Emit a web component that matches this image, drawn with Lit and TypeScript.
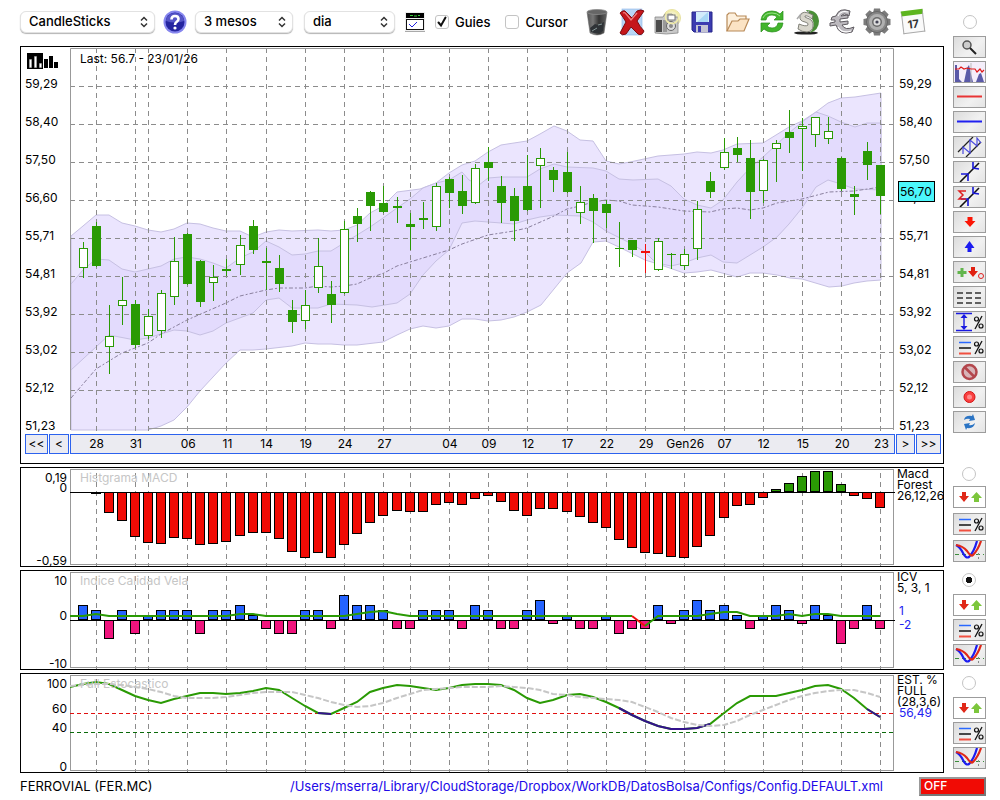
import { LitElement, html, svg, css } from "lit";
import { customElement, property } from "lit/decorators.js";

const X0 = 83.1;
const STEP = 13.08;
const barX = (i: number) => Math.floor(X0 + STEP * i);

const TICKS: [number, string][] = [
  [1, "28"], [4, "31"], [5, ""], [8, "06"], [11, "11"], [14, "14"], [17, "19"], [20, "24"], [23, "27"],
  [25, ""], [28, "04"], [31, "09"], [34, "12"], [37, "17"], [40, "22"], [43, "29"], [46, "Gen26"],
  [49, "07"], [52, "12"], [55, "15"], [58, "20"], [61, "23"],
];

const PRICES = ["59,29", "58,40", "57,50", "56,60", "55,71", "54,81", "53,92", "53,02", "52,12", "51,23"];

// high, body top, body bottom, low, kind (h hollow, f filled, r red)
const CANDLES: [number, number, number, number, string][] = [
  [242, 248, 268, 278, "h"], [222, 226, 266, 267, "f"], [305, 336, 347, 374, "h"], [277, 300, 306, 325, "h"],
  [300, 304, 345, 348, "f"], [309, 316, 336, 339, "h"], [290, 293, 331, 338, "h"], [237, 261, 297, 305, "h"],
  [233, 234, 284, 285, "f"], [260, 261, 302, 307, "f"], [265, 277, 283, 301, "h"], [259, 269, 271, 276, "f"],
  [235, 245, 265, 275, "h"], [220, 226, 250, 254, "f"], [248, 261, 263, 290, "f"], [255, 268, 284, 292, "f"],
  [300, 310, 322, 333, "f"], [290, 305, 321, 329, "h"], [238, 266, 288, 293, "h"], [281, 294, 305, 323, "f"],
  [221, 229, 293, 294, "h"], [208, 216, 224, 242, "f"], [191, 192, 206, 231, "f"], [186, 203, 212, 213, "f"],
  [197, 206, 208, 223, "f"], [213, 224, 227, 250, "f"], [202, 218, 220, 229, "f"], [183, 186, 227, 231, "h"],
  [177, 179, 193, 208, "f"], [175, 191, 206, 214, "f"], [164, 168, 203, 204, "h"], [147, 162, 168, 181, "f"],
  [176, 186, 203, 223, "f"], [188, 196, 221, 241, "f"], [155, 186, 210, 211, "f"], [148, 158, 166, 208, "h"],
  [167, 170, 180, 192, "f"], [152, 172, 192, 193, "f"], [186, 202, 213, 224, "h"], [194, 198, 211, 243, "f"],
  [200, 204, 213, 228, "f"], [222, 248, 249, 267, "f"], [240, 240, 250, 257, "f"], [244, 251, 253, 273, "r"],
  [238, 241, 270, 271, "h"], [253, 254, 255, 269, "f"], [249, 254, 266, 270, "h"], [201, 209, 249, 260, "h"],
  [172, 181, 192, 198, "f"], [138, 152, 168, 170, "h"], [137, 148, 155, 162, "f"], [140, 158, 192, 219, "f"],
  [159, 160, 191, 203, "h"], [140, 143, 149, 182, "h"], [110, 132, 138, 153, "f"], [118, 126, 129, 171, "h"],
  [117, 117, 135, 147, "h"], [117, 131, 139, 144, "h"], [157, 158, 189, 191, "f"], [186, 194, 197, 215, "f"],
  [142, 151, 165, 180, "f"], [165, 165, 196, 214, "f"],
];

const OUTER_TOP = "71,236 83,226 96,215 109,215 122,223 135,226 148,230 161,232 174,229 187,223 200,224 213,228 226,231 240,231 253,237 266,232 279,230 292,231 318,230 331,231 344,230 357,225 370,213 383,206 397,192 420,189 436,183 449,173 462,165 475,161 488,152 501,145 527,141 540,134 554,126 567,131 580,140 593,141 606,161 619,164 630,162 658,156 684,154 697,152 711,153 723,150 737,144 763,143 776,135 789,127 802,121 816,112 828,103 841,98 855,97 881,93";
const OUTER_BOTTOM = "881,280 867,281 854,283 842,286 829,287 802,279 790,278 777,275 763,273 750,273 737,277 711,270 697,272 684,273 658,264 645,260 619,247 606,241 593,242 581,263 567,273 541,305 527,312 514,317 501,320 488,321 475,319 462,319 449,326 436,328 423,326 410,329 397,335 383,342 357,345 344,345 331,344 318,344 305,343 292,346 266,349 253,350 240,350 226,363 200,391 187,407 174,420 161,426 148,430 71,430";
const INNER_TOP = "71,284 83,270 96,259 109,260 122,269 135,272 161,266 174,259 187,257 200,259 213,263 226,268 240,258 253,252 266,241 279,247 292,255 305,254 318,251 331,251 344,243 357,235 370,227 383,218 397,208 410,199 423,188 436,183 449,180 462,172 469,180 479,185 488,178 501,177 527,177 540,169 554,164 567,167 593,168 606,171 619,179 633,180 658,179 671,186 684,199 697,205 711,208 723,200 737,182 750,168 763,157 776,145 789,133 802,122 816,112 828,116 841,122 855,127 867,123 881,123";
const INNER_BOTTOM = "881,190 855,189 841,184 828,180 816,187 802,208 789,224 777,237 763,247 750,255 737,263 723,262 711,255 697,258 684,263 671,266 662,264 653,260 645,252 630,243 606,231 593,222 580,216 554,215 540,217 527,220 514,224 475,221 462,223 449,250 436,261 423,275 410,294 397,303 372,307 357,305 331,304 318,308 292,308 279,298 266,300 253,313 226,323 213,331 200,335 187,331 174,330 148,338 135,340 109,335 71,370";
const MIDDLE = "71,398 96,369 122,353 148,343 161,334 187,320 226,303 240,296 266,290 279,288 305,288 318,286 331,287 344,286 357,284 370,278 384,273 397,266 410,262 449,250 462,244 488,235 514,231 527,228 554,216 567,209 580,206 593,202 606,200 619,201 632,205 658,207 684,211 710,212 723,209 737,208 750,210 763,208 777,203 802,199 829,192 854,191 881,187";

const MACD = [
  492, 493, 512, 520, 536, 542, 543, 537, 538, 544, 543, 541, 535, 532, 532, 538, 551, 557, 552, 557, 544, 533,
  522, 515, 510, 511, 511, 504, 502, 504, 498, 495, 501, 510, 515, 508, 508, 511, 516, 522, 527, 539, 547, 552,
  553, 556, 557, 546, 535, 517, 505, 504, 497, 489, 483, 476, 471, 471, 484, 495, 498, 507,
];
const ICV = [
  3, 2, -4, 2, -3, 1, 2, 2, 2, -3, 2, 2, 3, 1, -2, -3, -3, 2, 2, -2, 5, 3, 3, 2, -2, -2, 2, 2, 2, -2, 3, 2, -2,
  -2, 2, 4, -1, 1, -2, -2, 1, -3, -2, -2, 3, -1, 2, 4, 2, 3, 1, -2, 1, 3, 2, -1, 3, 1, -5, -2, 3, -2,
];
const ICV_BUMPS: Record<number, number> = {
  1: 614, 12: 614, 13: 614, 21: 614, 22: 612, 23: 611, 24: 614, 43: 626, 48: 614, 49: 612, 50: 612, 54: 614, 56: 614, 57: 614,
};
const STOCH = [
  684, 682, 684, 690, 696, 700, 703, 699, 696, 693, 693, 694, 693, 691, 688, 690, 698, 706, 713, 714, 708, 702,
  692, 688, 685, 686, 688, 690, 688, 685, 684, 684, 685, 690, 698, 703, 700, 695, 694, 697, 702, 708, 715, 721,
  726, 729, 729, 728, 724, 713, 703, 696, 696, 696, 693, 690, 686, 685, 689, 698, 709, 717,
];
const STOCH_AVG = [
  685, 684, 684, 685, 687, 689, 692, 696, 698, 698, 698, 697, 695, 693, 692, 692, 692, 695, 698, 702, 705, 707,
  706, 703, 698, 694, 690, 689, 688, 687, 687, 687, 686, 687, 688, 690, 694, 695, 697, 698, 699, 700, 702, 707,
  712, 718, 722, 725, 726, 725, 721, 715, 710, 705, 700, 696, 693, 691, 690, 690, 693, 697,
];

const line = (ys: number[], from: number, to: number) =>
  ys.slice(from, to + 1).map((y, k) => `${barX(from + k)},${y}`).join(" ");

const verticals = (top: number, bottom: number) =>
  TICKS.map(([i]) => svg`<line class="grid" x1=${barX(i) + 0.5} x2=${barX(i) + 0.5} y1=${top} y2=${bottom}></line>`);

const priceSvg = () => svg`
  <polygon class="outer" points="${OUTER_TOP} ${OUTER_BOTTOM}"></polygon>
  <polygon class="inner" points="${INNER_TOP} ${INNER_BOTTOM}"></polygon>
  <polyline class="mid" points=${MIDDLE}></polyline>
  ${verticals(48, 431)}
  ${PRICES.slice(0, 9).map((_, k) => svg`<line class="grid" x1="70" x2="895" y1=${86.5 + 38 * k} y2=${86.5 + 38 * k}></line>`)}
  <path class="frame" d="M70.5 430V48.5H893.5V430"></path>
  <path class="frame" d="M148 428.5H894"></path>
  ${CANDLES.map(([hi, top, bottom, low, kind], i) => {
    const x = barX(i);
    const c = kind === "r" ? "#f20d0d" : "#2a9a04";
    return svg`<rect x=${x} y=${hi} width="1" height=${low - hi} fill=${c}></rect>
      ${kind === "h"
        ? svg`<rect x=${x - 3.5} y=${top + 0.5} width="8" height=${Math.max(bottom - top - 1, 1)} fill="#fff" stroke=${c}></rect>`
        : svg`<rect x=${x - 4} y=${top} width="9" height=${bottom - top} fill=${c}></rect>`}`;
  })}`;

const macdSvg = () => svg`
  ${verticals(473, 566)}
  <rect class="frame" x="70.5" y="469.5" width="823" height="95"></rect>
  ${MACD.map((y, i) => y === 492 ? "" : y > 492
    ? svg`<rect class="bar" x=${barX(i) - 4.5} y="492.5" width="9" height=${y - 492} fill="#f10b05"></rect>`
    : svg`<rect class="bar" x=${barX(i) - 4.5} y=${y + 0.5} width="9" height=${491 - y} fill="#2a9a04"></rect>`)}
  <line class="zero" x1="70" x2="895" y1="492.5" y2="492.5"></line>`;

const icvSvg = () => {
  const ys = ICV.map((_, i) => ICV_BUMPS[i] ?? 616);
  return svg`
  ${verticals(576, 669)}
  <rect class="frame" x="70.5" y="572.5" width="823" height="95"></rect>
  ${ICV.map((v, i) => v > 0
    ? svg`<rect class="bar" x=${barX(i) - 4.5} y=${620.5 - 5 * v} width="9" height=${5 * v - 1} fill="#2563ff"></rect>`
    : svg`<rect class="bar" x=${barX(i) - 4.5} y="620.5" width="9" height=${-5 * v - 2} fill="#f0147d"></rect>`)}
  <line class="zero" x1="70" x2="895" y1="620.5" y2="620.5"></line>
  <polyline class="up" points="70,616 ${line(ys, 0, 42)}"></polyline>
  <polyline class="down" points=${line(ys, 42, 43)}></polyline>
  <polyline class="up" points=${line(ys, 43, 61)}></polyline>`;
};

const stochSvg = () => svg`
  ${verticals(679, 772)}
  <rect class="frame" x="70.5" y="675.5" width="823" height="95"></rect>
  <line class="limit warn" x1="70" x2="895" y1="713.5" y2="713.5"></line>
  <line class="limit safe" x1="70" x2="895" y1="732.5" y2="732.5"></line>
  <polyline class="up" points="70,687 ${line(STOCH, 0, 61)}"></polyline>
  <polyline class="weak" points=${line(STOCH, 18, 19)}></polyline>
  <polyline class="weak" points=${line(STOCH, 41, 48)}></polyline>
  <polyline class="weak" points=${line(STOCH, 60, 61)}></polyline>
  <polyline class="avg" points="70,686 ${line(STOCH_AVG, 0, 61)}"></polyline>`;

const gearTeeth = [0, 45, 90, 135, 180, 225, 270, 315];

const BIG: Record<string, unknown> = {
  trash: svg`<defs><linearGradient id="t"><stop offset="0" stop-color="#555"/><stop offset=".3" stop-color="#777"/><stop offset=".6" stop-color="#333"/><stop offset="1" stop-color="#666"/></linearGradient></defs>
    <path d="M4 4L7 25Q14 29 21 25L24 4Z" fill="url(#t)" stroke="#666" stroke-width=".5"/><ellipse cx="14" cy="4" rx="10" ry="2.500" fill="#666" stroke="#8c8c8c" stroke-width=".8"/><path d="M7 20l5-4 3 1 6-3-1 9q-5 4-12 1z" fill="#2e3236"/><path d="M9 23l5-3M15 17l4-1" stroke="#899" fill="none"/>`,
  remove: svg`<rect x="4" y="1" width="20" height="26" fill="#b9d6f5" stroke="#8ab4e8" stroke-width=".6"/>
    <path d="M2 5Q6 1 8 4L14 10L19 3Q23 1 26 3L19 13Q22 19 26 23Q24 28 20 26L13 19L8 26Q4 28 2 25L8 14Q5 9 2 5Z" fill="#c5161b" stroke="#7d0c10"/><path d="M5 5q2-1 3 1l5 6 6-7" stroke="#f08080" fill="none" stroke-width="1.300"/>`,
  camera: svg`<circle cx="19" cy="10" r="8.500" fill="#f3f0c4" stroke="#e6e0a0"/><path d="M2 9h8l2-3h7l2 3h4v16q-12 2-23 0z" fill="#c9c9c9" stroke="#888" stroke-width=".8"/><path d="M3 12h6v12H3z" fill="#4c4c4c"/><path d="M10 12h4v12h-4z" fill="#999"/><circle cx="18" cy="18" r="4.500" fill="#ddd" stroke="#666"/><circle cx="18" cy="18" r="2" fill="#888"/><circle cx="19" cy="9" r="6.500" fill="none" stroke="#f1eca8" stroke-width="1.500"/><rect x="15" y="7" width="7" height="5" fill="#fff" stroke="#777"/>`,
  save: svg`<path d="M4 4h20v20H6l-2-2z" fill="#3b3bb0" stroke="#26268a"/><rect x="8" y="4" width="13" height="10" fill="#d3ecfb"/><path d="M9 14L20 4v10z" fill="#a9d8f5"/><rect x="8" y="17" width="12" height="7.500" fill="#c4c4d4"/><rect x="10" y="18" width="3" height="6" fill="#3b3bb0"/>`,
  open: svg`<path d="M4 23V7l2-2h6l2 3h9v4" fill="#fdf0dd" stroke="#b88a58" stroke-width="1.200"/><path d="M4 23l5-10h6l2-2h9l-5 12z" fill="#fbe3c4" stroke="#b88a58" stroke-width="1.200"/>`,
  refresh: svg`<path d="M3 12Q4 3 14 3Q19 3 22 6L25 3V12H16L19 9Q17 7 14 7Q9 7 8 12Z" fill="#42b52c" stroke="#2a8c1c" stroke-width=".7"/><path d="M25 15Q24 24 14 24Q9 24 6 21L3 24V15H12L9 18Q11 20 14 20Q19 20 20 15Z" fill="#42b52c" stroke="#2a8c1c" stroke-width=".7"/><path d="M5 10q2-5 9-5 5 0 8 3" stroke="#9be28a" fill="none"/>`,
  dollar: svg`<ellipse cx="13" cy="25" rx="12" ry="1.600" fill="#222"/><path d="M13 2Q25 2 26 13Q26 22 17 25Q23 17 19 11Z" fill="#4a8f36"/><path d="M20 7Q9 1 7 8Q6 13 12 14Q16 15 15 17Q13 19 6 16L5 21Q9 24 14 24Q20 23 20 18Q21 12 14 10Q11 9 12 8Q14 7 19 11Z" fill="#d8d6cc" stroke="#77776e" stroke-width=".9"/><path d="M8 6l-4 5M16 3l-2 2" stroke="#aaa" stroke-width="1.500"/>`,
  euro: svg`<path d="M22 3Q11-1 8 8L4 9L3 12L7 12V14L2 15V18L8 17Q11 28 24 24L26 19Q17 23 14 17L20 16V13L12 14V11L20 10V7L13 8Q16 4 21 8Z" fill="#bdbabf" stroke="#5e5a60"/><path d="M10 19q4 7 13 4M10 8q3-6 10-4" stroke="#fff" fill="none" stroke-width="1.200"/>`,
  gear: svg`${gearTeeth.map((a) => svg`<path d="M11 0.500h6l1 5h-8z" fill="#7b7b7b" transform="rotate(${a} 14 14)"/>`)}<circle cx="14" cy="14" r="10.500" fill="#858585" stroke="#666"/><circle cx="14" cy="14" r="8" fill="#b0b0b0"/><circle cx="14" cy="14" r="5" fill="#6a6a6a"/><circle cx="14" cy="14" r="3.500" fill="#ddd"/><circle cx="14" cy="14" r="1.600" fill="#445"/>`,
};

const pencilArrow = svg`<path d="M6 20L25 1" stroke="#111" stroke-width="1.600"/><path d="M7 12l7 0 0 7M19 0l0 6 6 1" fill="none" stroke="#1818d8" stroke-width="1.600"/>`;
const percent = svg`<circle cx="22.500" cy="7" r="2" fill="none" stroke="#111" stroke-width="1.200"/><circle cx="27" cy="14" r="2" fill="none" stroke="#111" stroke-width="1.200"/><path d="M28 4L21 17" stroke="#111" stroke-width="1.300"/>`;

const SMALL: Record<string, unknown> = {
  zoom: svg`<circle cx="13" cy="8" r="4" fill="#ccc" stroke="#555" stroke-width="1.500"/><path d="M16 11l6 6" stroke="#222" stroke-width="2"/>`,
  volume: svg`<rect width="31" height="20" fill="#f4eefa"/><path d="M1 20V3l2 0v5l2 0v9l3 3zM10 20l3-14 2-3 2 9 2 8zM22 20l3-8 2-1 3 9z" fill="#5a5aa8"/><path d="M17 1v19" stroke="#bbb"/><path d="M1 7h4l2-2 3 2 3-1 4 1h4l2 3 3-3 2 3 2-2" fill="none" stroke="#e01818" stroke-width="1.200"/>`,
  red: svg`<path d="M3 9.500h25" stroke="#e83434" stroke-width="2"/>`,
  blue: svg`<path d="M3 9.500h25" stroke="#2020f0" stroke-width="2"/>`,
  channel: svg`<path d="M4 15L19 0M12 20L27 5" stroke="#222" stroke-width="1.300"/><path d="M9 17V10l7 6V3l7 6V1l4 5" fill="none" stroke="#4a4ae0" stroke-width="1.200"/>`,
  trend: pencilArrow,
  sigma: svg`${pencilArrow}<path d="M12 4H5l4 4-4 4h7" fill="none" stroke="#e02020" stroke-width="1.500"/>`,
  down: svg`<path d="M13.500 5h5v4h3l-5.500 6-5.500-6h3z" fill="#fb1505"/>`,
  up: svg`<path d="M15.500 4l5 7h-3v4h-4v-4h-3z" fill="#1c1cf0"/>`,
  marks: svg`<path d="M8 6v9M3.500 10.500h9" stroke="#62b54c" stroke-width="3"/><path d="M17 5h4v4h3l-5 6-5-6h3z" fill="#e02010"/><circle cx="27" cy="14" r="2.500" fill="none" stroke="#e02020"/>`,
  dashes: svg`<path d="M3 6h25M3 11h25M3 16h25" stroke="#333" stroke-width="1.500" stroke-dasharray="6 3"/>`,
  range: svg`<path d="M2 1.500h16M2 18.500h16" stroke="#1818e0" stroke-width="1.500"/><path d="M10 3v14" stroke="#1818e0" stroke-width="1.400"/><path d="M10 2l3.500 4h-7zM10 18l3.500-4h-7z" fill="#1818e0"/>${percent}`,
  levels: svg`<path d="M5 5.500h12" stroke="#2a68ff" stroke-width="1.500"/><path d="M5 11h12" stroke="#111" stroke-width="1.500"/><path d="M5 16.500h12" stroke="#f05040" stroke-width="2"/>${percent}`,
  ban: svg`<circle cx="15.500" cy="10" r="7" fill="#d8b4b8" stroke="#b3474d" stroke-width="2.500"/><path d="M10.500 5l10 10" stroke="#b3474d" stroke-width="2.500"/>`,
  dot: svg`<circle cx="15.500" cy="10" r="5.500" fill="#fa4040" stroke="#d21818"/><circle cx="15.500" cy="10" r="2.500" fill="#ff8a8a"/>`,
  sync: svg`<path d="M10 8q1-5 8-4l1-2 2 6-6 1 1-2q-3-1-6 1zM21 11q-1 6-8 5l-1 2-2-6 6-1-1 2q3 1 6-2z" fill="#2b74c4"/>`,
  updown: svg`<path d="M8 5h4v4h3l-5 6-5-6h3z" fill="#e02818"/><path d="M22.500 5l5.500 6h-3v4h-5v-4h-3z" fill="#7cc63c"/>`,
  curve: svg`<path d="M1 13.500h29" stroke="#3b8c3b" stroke-dasharray="4 3"/><path d="M24.500 12v8" stroke="#888" stroke-dasharray="2 2"/><path d="M2 4Q6 6 9 12Q12 18 15 16Q20 11 23 0" fill="none" stroke="#1c1cf0" stroke-width="2.200"/><path d="M2 4Q9 5 13 10Q17 16 19 14Q24 9 27 0" fill="none" stroke="#e02818" stroke-width="2.200"/>`,
};

@customElement("tool-button")
export class ToolButton extends LitElement {
  @property() icon = "";
  @property() label = "";
  static styles = css`
    :host { display: block; }
    button { display: block; box-sizing: border-box; width: 33px; height: 22px; padding: 0; border: 1px solid #9c9c9c; background: linear-gradient(135deg, #dcdcdc, #f1f1f1 60%, #e4e4e4); }
    .white { background: #fff; }
    svg { display: block; width: 31px; height: 20px; }
  `;
  render() {
    return html`<button class=${this.icon === "updown" ? "white" : ""} aria-label=${this.label}>
      <svg viewBox="0 0 31 20">${SMALL[this.icon]}</svg></button>`;
  }
}

@customElement("app-root")
export class AppRoot extends LitElement {
  static styles = css`
    :host { display: block; background: #fff; color: #000; font: 12px/16px Inter, "Noto Sans", sans-serif; }
    .page { display: grid; grid-template-columns: minmax(0, 1fr) 33px; column-gap: 9px; row-gap: 3px; padding: 0 14px 0 20px; }
    .toolbar { display: flex; align-items: center; height: 43px; font-size: 13px; font-weight: 500; }
    .field { position: relative; display: block; margin-right: 8px; }
    .field svg { position: absolute; right: 6px; top: 5px; width: 10px; height: 12px; pointer-events: none; }
    select { appearance: none; display: block; height: 22px; padding: 0 20px 2px 8px; border: 1px solid #e2e2e2; border-radius: 6px; background: #fff; box-shadow: 0 1px 1px #b4b4b4; font: inherit; color: #000; }
    .wide { width: 135px; }
    .medium { width: 98px; }
    .narrow { width: 91px; }
    .plain { display: block; padding: 0; border: 0; background: none; }
    .plain svg { display: block; }
    .help { margin-right: 8px; }
    .interval { margin-left: 3px; }
    .panelicon { margin: 0 10px 0 2px; }
    .check { display: flex; align-items: center; gap: 6px; margin-right: 15px; }
    input { appearance: none; box-sizing: border-box; width: 14px; height: 14px; margin: 0; border: 1px solid #c4c4c4; background: #fff; }
    .box { border-radius: 3px; }
    .box:checked { background: no-repeat center/12px url("data:image/svg+xml,%3Csvg xmlns='http://www.w3.org/2000/svg' viewBox='0 0 12 12'%3E%3Cpath d='M2.500 6.500l2.500 3 4.500-8' fill='none' stroke='%23111' stroke-width='2' stroke-linecap='round'/%3E%3C/svg%3E"); }
    .dot { border-radius: 50%; }
    .dot:checked { background: radial-gradient(circle, #111 0 3px, #fff 3.500px); }
    .icons { display: flex; gap: 7px; }
    .icons svg { width: 28px; height: 28px; }
    .calendar { box-sizing: border-box; width: 22px; height: 23px; margin: 2px 0 0 4px; padding: 1px 0 0; border: 1px solid #aaa; border-top: 5px solid #5db51f; background: #fafafa; font: bold 11px/12px Inter, sans-serif; color: #333; transform: rotate(-7deg); }
    .topradio { display: flex; align-items: center; justify-content: center; height: 43px; }
    .panel { display: grid; grid-template-columns: 49px minmax(0, 1fr) 48px; border: 1px solid #000; overflow: hidden; }
    .small { height: 98px; }
    .side { display: flex; flex-direction: column; align-items: center; gap: 5px; }
    .side .dot { margin-right: 1px; }
    .tools { gap: 3px; margin-top: -10px; }
    .low { gap: 3px; padding-top: 3px; }
    .low .dot { margin-bottom: 4px; }
    .plot { position: relative; min-width: 0; }
    .plot svg { display: block; width: 100%; height: 100%; }
    .title { position: absolute; left: 10px; top: 2px; color: #c6c6c6; }
    .dark { top: 4px; color: #000; }
    .scale { display: grid; align-content: start; grid-auto-rows: 16px; row-gap: 22px; padding: 29px 0 0 4px; }
    .leftscale { grid-template-rows: 7px; padding-top: 0; }
    .logo { height: 7px; padding: 5px 0 0 2px; box-sizing: border-box; }
    .logo svg { display: block; width: 32px; height: 17px; }
    .right { position: relative; }
    .price { position: absolute; left: 3px; top: 134px; box-sizing: border-box; width: 37px; height: 21px; border: 1px solid #000; background: #4cf7fb; line-height: 20px; padding-left: 1px; }
    .times { grid-column: 1 / -1; display: grid; grid-template-columns: 23px 20px minmax(0, 1fr) 19px 25px; column-gap: 1px; height: 20px; padding: 0 2px 9px 4px; }
    .times button, .strip { box-sizing: border-box; height: 20px; border: 1px solid #2c62ee; background: #ebebf1; padding: 0; font: 12px/18px Inter, sans-serif; color: #000; }
    .strip { display: grid; grid-template-columns: repeat(62, minmax(0, 1fr)); padding: 0 6px; }
    .tick { display: flex; justify-content: center; white-space: nowrap; }
    .axis { display: grid; padding: 5px 3px 0 0; text-align: right; line-height: 10px; }
    .axis span:nth-child(2) { grid-row: 3; }
    .axis span:nth-child(3) { grid-row: 5; }
    .axis span:nth-child(4) { grid-row: 7; }
    .macd { grid-template-rows: 10px 0 10px 1fr 10px; }
    .icv { grid-template-rows: 10px 25px 10px 1fr 10px; }
    .est { grid-template-rows: 10px 15px 10px 9px 10px 1fr 10px; }
    .legend { padding-left: 2px; line-height: 11px; white-space: nowrap; }
    .legend div { padding-left: 2px; color: #2222f0; }
    .gap { margin-top: 11px; line-height: 14px; }
    .footer { display: flex; align-items: center; grid-column: 1 / -1; height: 20px; font-size: 13px; }
    .footer a { margin-left: auto; margin-right: 36px; color: #2109e8; text-decoration: none; }
    .off { width: 67px; height: 19px; padding: 0 0 0 3px; border: 2px solid; border-color: #999 #777 #777 #999; background: #f10b05; color: #fff; text-align: left; font: 500 12px/14px Inter, sans-serif; }
    .outer { fill: #ebe5fe; stroke: #c6c0e2; }
    .inner { fill: #e3dbfd; stroke: #c6c0e2; }
    .mid { fill: none; stroke: #8a809e; stroke-dasharray: 4 2 2 2; }
    .grid { stroke: #8c8c8c; stroke-dasharray: 5 4; }
    .frame { fill: none; stroke: #999; }
    .zero, .bar { stroke: #000; }
    .up, .down, .weak { fill: none; stroke-width: 2; stroke: #2a9a04; }
    .down { stroke: #f01010; }
    .weak { stroke: #33128c; }
    .avg { fill: none; stroke: #c6c6c6; stroke-width: 2; stroke-dasharray: 6 2; }
    .limit { stroke-dasharray: 4 3; }
    .warn { stroke: #e01010; }
    .safe { stroke: #0a6a0a; }
  `;

  private select(cls: string, label: string, value: string, field = "") {
    return html`<span class="field ${field}"><select class=${cls} aria-label=${label}><option>${value}</option></select>
      <svg viewBox="0 0 10 12"><path d="M2 4.500L5 1.500L8 4.500M2 7.500L5 10.500L8 7.500" fill="none" stroke="#333" stroke-width="1.500" /></svg></span>`;
  }

  private radio(label: string, checked = false) {
    return html`<input class="dot" type="radio" name="target" aria-label=${label} .checked=${checked} />`;
  }

  private side(name: string, cls: string, checked = false) {
    return html`<div class="side ${cls}">
      ${this.radio(name, checked)}
      <tool-button icon="updown" label="${name} signals"></tool-button>
      <tool-button icon="levels" label="${name} levels"></tool-button>
      <tool-button icon="curve" label="${name} curves"></tool-button>
    </div>`;
  }

  private plot(viewBox: string, body: unknown, title: string, dark = false) {
    return html`<div class="plot"><svg viewBox=${viewBox} preserveAspectRatio="none">${body}</svg>
      <span class="title ${dark ? "dark" : ""}">${title}</span></div>`;
  }

  render() {
    const tools = ["zoom", "volume", "red", "blue", "channel", "trend", "sigma", "down", "up", "marks", "dashes", "range", "levels", "ban", "dot", "sync"];
    return html`<main class="page">
      <header class="toolbar">
        ${this.select("wide", "Chart type", "CandleSticks")}
        <button class="plain help" aria-label="Help"><svg width="24" height="24" viewBox="0 0 24 24">
          <circle cx="12" cy="12" r="11.500" fill="#8686ee" /><circle cx="12" cy="12" r="9.500" fill="#2525a0" /><path d="M3 11a9 8 0 0 1 18 0q-9 3-18 0z" fill="#5555c6" />
          <path d="M8.500 9.500Q8.500 6 12 6T15.500 9Q15.500 11 13.500 12Q12 13 12 15" fill="none" stroke="#fff" stroke-width="2.600" /><circle cx="12" cy="18" r="1.600" fill="#fff" /></svg></button>
        ${this.select("medium", "Period", "3 mesos")}
        ${this.select("narrow", "Interval", "dia", "interval")}
        <button class="plain panelicon" aria-label="Panel"><svg width="20" height="20" viewBox="0 0 20 20">
          <rect width="20" height="20" fill="#eee" /><rect x="1" y="1" width="18" height="5" fill="#000" /><path d="M5 3.500h3M9 4h3M13 3.500h2" stroke="#36d036" />
          <rect x="1.500" y="7.500" width="17" height="10" fill="#fff" stroke="#111" /><path d="M4 12l3 3 5-5" stroke="#2020e0" fill="none" /><path d="M0 19.500h20" stroke="#aaa" /></svg></button>
        <label class="check"><input class="box" type="checkbox" checked />Guies</label>
        <label class="check"><input class="box" type="checkbox" />Cursor</label>
        <div class="icons">
          ${Object.keys(BIG).map((k) => html`<button class="plain" aria-label=${k}><svg viewBox="0 0 28 28">${BIG[k]}</svg></button>`)}
          <button class="calendar" aria-label="Calendar">17</button>
        </div>
      </header>
      <div class="topradio">${this.radio("Price")}</div>

      <section class="panel">
        <div class="scale leftscale">
          <div class="logo"><svg viewBox="0 0 32 17"><path d="M0 1h16v16H0z" /><path d="M2.500 7.500h2v8h-2zM7.500 4.500h2v11h-2zM12.500 11.500h2v4h-2z" fill="#fff" stroke="#bbb" stroke-width=".5" /><path d="M17 7h4v9h-4zM22 4h4v12h-4zM27 10h4v6h-4z" /></svg></div>
          ${PRICES.map((p) => html`<span>${p}</span>`)}
        </div>
        ${this.plot("70 47 825 387", priceSvg(), "Last: 56.7 - 23/01/26", true)}
        <div class="scale right">${PRICES.map((p) => html`<span>${p}</span>`)}<output class="price">56,70</output></div>
        <nav class="times">
          <button aria-label="First">&lt;&lt;</button><button aria-label="Previous">&lt;</button>
          <div class="strip">${TICKS.filter(([, t]) => t).map(([i, t]) => html`<span class="tick" style="grid-column:${i + 1}">${t}</span>`)}</div>
          <button aria-label="Next">&gt;</button><button aria-label="Last">&gt;&gt;</button>
        </nav>
      </section>
      <div class="side tools">${tools.map((t) => html`<tool-button icon=${t} label=${t}></tool-button>`)}</div>

      <section class="panel small">
        <div class="axis macd"><span>0,19</span><span>0</span><span>-0,59</span></div>
        ${this.plot("70 468 825 98", macdSvg(), "Histgrama MACD")}
        <div class="legend">Macd<br />Forest<br />26,12,26</div>
      </section>
      ${this.side("MACD", "")}

      <section class="panel small">
        <div class="axis icv"><span>10</span><span>0</span><span>-10</span></div>
        ${this.plot("70 571 825 98", icvSvg(), "Indice Calidad Vela")}
        <div class="legend">ICV<br />5, 3, 1<div class="gap">1<br />-2</div></div>
      </section>
      ${this.side("ICV", "low", true)}

      <section class="panel small">
        <div class="axis est"><span>100</span><span>60</span><span>40</span><span>0</span></div>
        ${this.plot("70 674 825 98", stochSvg(), "Full Estocastico")}
        <div class="legend">EST. %<br />FULL<br />(28,3,6)<div>56,49</div></div>
      </section>
      ${this.side("EST", "low")}

      <footer class="footer">
        <span>FERROVIAL (FER.MC)</span>
        <a href="#config">/Users/mserra/Library/CloudStorage/Dropbox/WorkDB/DatosBolsa/Configs/Config.DEFAULT.xml</a>
        <button class="off">OFF</button>
      </footer>
    </main>`;
  }
}
